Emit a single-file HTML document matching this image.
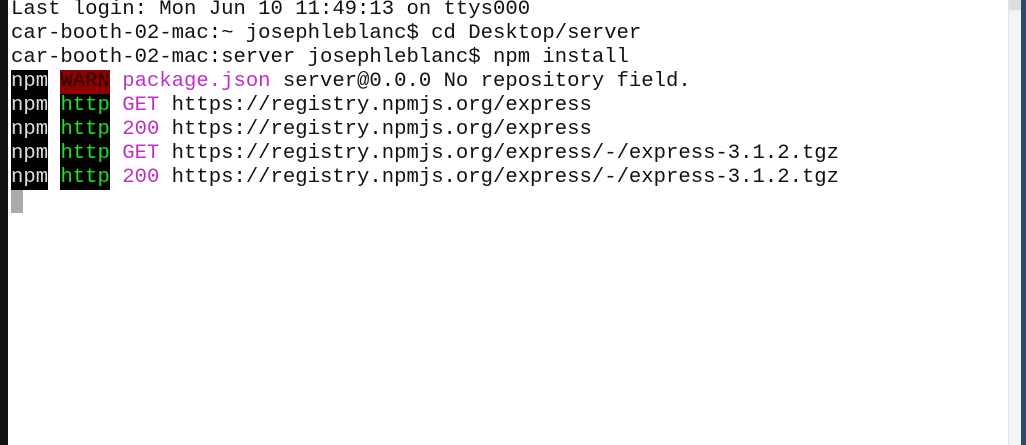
<!DOCTYPE html>
<html><head><style>
body{margin:0;width:1026px;height:445px;background:#fff;overflow:hidden;position:relative;font-family:"Liberation Mono",monospace;}
#l{position:absolute;left:0;top:0;width:8px;height:445px;background:#111}
#sb{position:absolute;left:1008px;top:0;width:13px;height:445px;background:#f4f4f4;border-left:1px solid #e4e4e4}
#sbt{position:absolute;left:1009px;top:0;width:12px;height:10px;background:#ddd}
#r{position:absolute;left:1021px;top:0;width:5px;height:445px;background:#2a4a6c}
#t{position:absolute;left:11px;top:-2px;font-size:20.6px;line-height:24px;color:#111;white-space:pre}
.n,.w,.h{display:inline-block;height:24px;vertical-align:top;line-height:24px}
.n{background:#000;color:#ddd}
.w{background:#8b0000;color:#2a0000}
.h{background:#000;color:#22dd22}
.m{color:#c030c8}
#c{position:absolute;left:11px;top:190px;width:12px;height:23px;background:#aaa}
</style></head><body>
<div id="l"></div>
<div id="t">Last login: Mon Jun 10 11:49:13 on ttys000
car-booth-02-mac:~ josephleblanc$ cd Desktop/server
car-booth-02-mac:server josephleblanc$ npm install
<span class="n">npm</span> <span class="w">WARN</span> <span class="m">package.json</span> server@0.0.0 No repository field.
<span class="n">npm</span> <span class="h">http</span> <span class="m">GET</span> https://registry.npmjs.org/express
<span class="n">npm</span> <span class="h">http</span> <span class="m">200</span> https://registry.npmjs.org/express
<span class="n">npm</span> <span class="h">http</span> <span class="m">GET</span> https://registry.npmjs.org/express/-/express-3.1.2.tgz
<span class="n">npm</span> <span class="h">http</span> <span class="m">200</span> https://registry.npmjs.org/express/-/express-3.1.2.tgz</div>
<div id="c"></div>
<div id="sb"></div><div id="sbt"></div><div id="r"></div>
</body></html>
